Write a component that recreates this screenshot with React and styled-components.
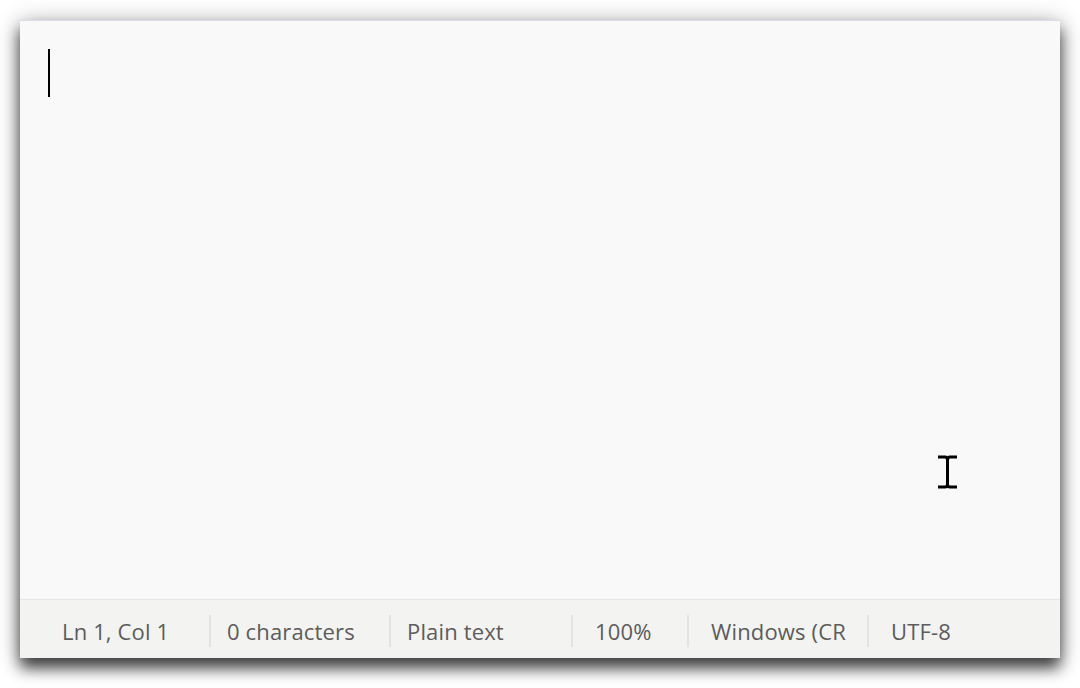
import React from "react";
import styled, { createGlobalStyle } from "styled-components";

const GlobalStyle = createGlobalStyle`
  html, body {
    margin: 0;
    padding: 0;
    background: #ffffff;
    font-family: "Open Sans", "Noto Sans", sans-serif;
  }
`;

const Page = styled.div`
  width: 1080px;
  height: 688px;
  box-sizing: border-box;
  padding: 20px 20px 30px 20px;
  display: flex;
`;

const Window = styled.div`
  flex: 1;
  display: flex;
  flex-direction: column;
  background: #f9f9f9;
  border-top: 1px solid #dcdde6;
  box-shadow: 0 10px 14px rgba(0, 0, 0, 0.7), 0 2px 22px rgba(0, 0, 0, 0.3);
  position: relative;
`;

const Editor = styled.div`
  flex: 1;
  position: relative;
  padding: 28px 28px;
`;

const Caret = styled.div`
  width: 1.5px;
  height: 48px;
  background: #000;
`;

const Pointer = styled.svg`
  position: absolute;
  left: 917px;
  top: 434px;
`;

const StatusBar = styled.div`
  height: 59px;
  border-top: 1px solid #e6e6e6;
  background: #f3f3f2;
  display: flex;
  align-items: center;
  padding-top: 4px;
  box-sizing: border-box;
`;

const Segment = styled.div`
  width: ${(p) => p.w}px;
  box-sizing: border-box;
  padding-left: ${(p) => p.pl}px;
  height: 32px;
  display: flex;
  align-items: center;
  border-left: ${(p) => (p.first ? "none" : "2px solid #e3e3e3")};
  font-size: 22px;
  letter-spacing: 0.15px;
  color: #5c5c5c;
  white-space: nowrap;
  overflow: hidden;
`;

const Clip = styled.span`
  display: block;
  width: ${(p) => p.w}px;
  overflow: hidden;
`;

export default function App() {
  return (
    <>
      <GlobalStyle />
      <Page>
        <Window>
          <Editor>
            <Caret />
            <Pointer width="22" height="34" viewBox="0 0 22 34">
              <path d="M1 2 H8 M13 2 H20 M8 2 Q10.5 2 10.5 5 V29 Q10.5 32 8 32 M13 2 Q10.5 2 10.5 5 M10.5 29 Q10.5 32 13 32 M1 32 H8 M13 32 H20" stroke="#000" strokeWidth="3" fill="none" />
            </Pointer>
          </Editor>
          <StatusBar>
            <Segment first w={189} pl={42}>Ln 1, Col 1</Segment>
            <Segment w={180} pl={16}>0 characters</Segment>
            <Segment w={182} pl={16}>Plain text</Segment>
            <Segment w={116} pl={22}>100%</Segment>
            <Segment w={180} pl={22}><Clip w={138}>Windows (CR</Clip></Segment>
            <Segment w={150} pl={22}>UTF-8</Segment>
          </StatusBar>
        </Window>
      </Page>
    </>
  );
}
